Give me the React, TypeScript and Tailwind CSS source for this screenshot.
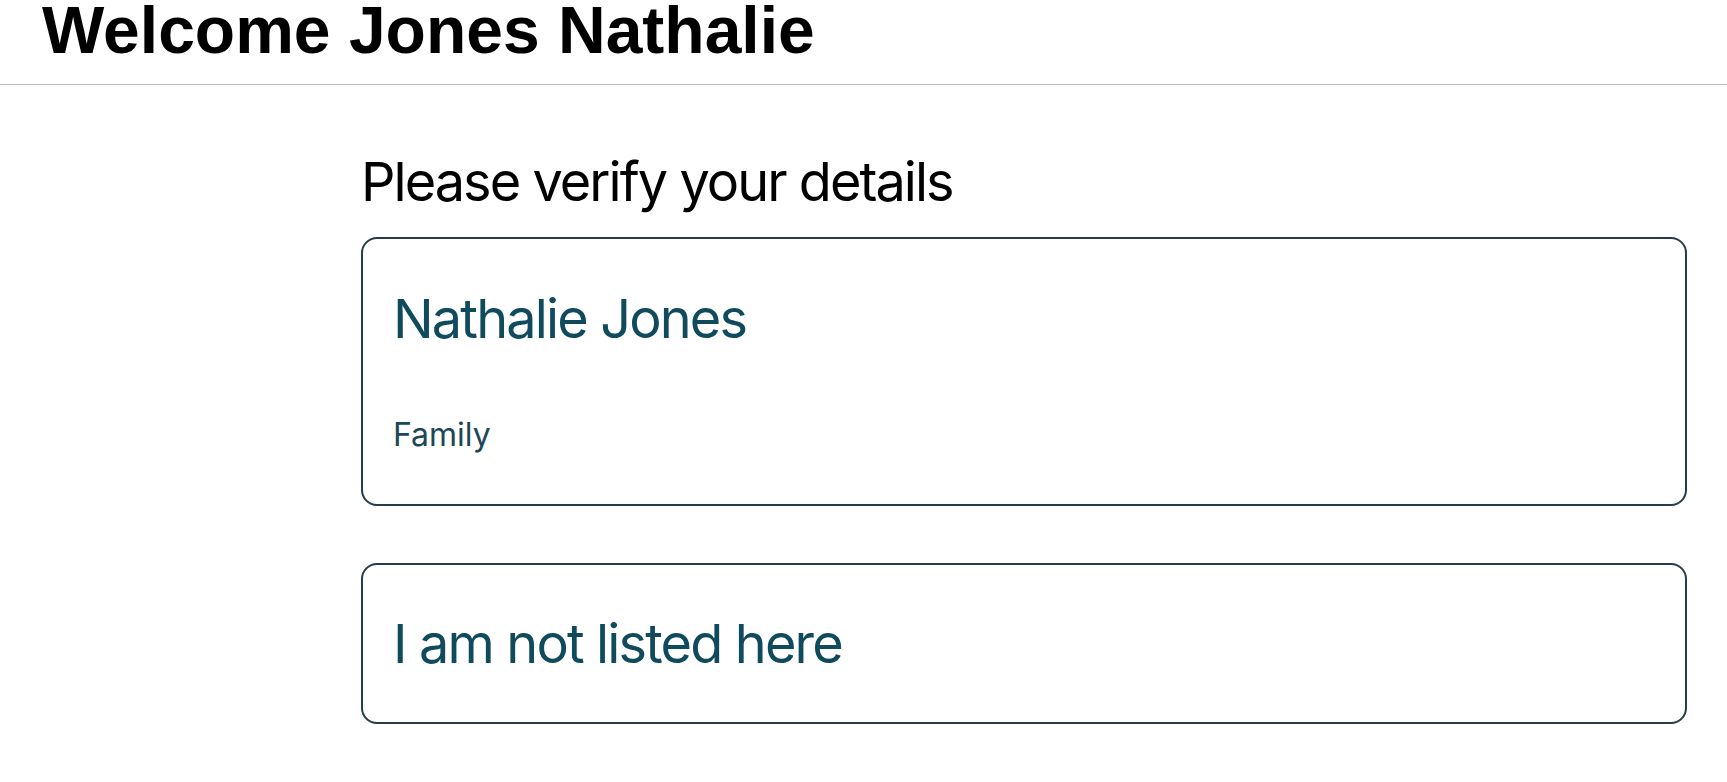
type Person = {
  name: string;
  relation?: string;
};

const people: Person[] = [{ name: "Nathalie Jones", relation: "Family" }];

function PersonCard({ person }: { person: Person }) {
  return (
    <button
      type="button"
      className="w-full text-left bg-white border-2 border-[#243c4b] rounded-[16px] px-[30px] pt-[53px] pb-[53px]"
    >
      <p className="text-[54px] leading-none tracking-[-0.034em] text-[#104a5d]">{person.name}</p>
      {person.relation && (
        <p className="mt-[73px] text-[32px] leading-none text-[#1c4759]">{person.relation}</p>
      )}
    </button>
  );
}

export default function App() {
  return (
    <div className="min-h-screen bg-white font-['Inter',sans-serif]">
      <header className="h-[85px] border-b border-[#bcbcbc] pl-[42px] pt-[2px]">
        <h1 className="font-['Liberation_Sans',Arial,sans-serif] text-[66px] font-bold leading-[56px] text-black">
          Welcome Jones Nathalie
        </h1>
      </header>

      <main className="pl-[361px] pr-[40px] pt-[70px]">
        <h2 className="text-[54px] leading-none tracking-[-0.036em] text-black">Please verify your details</h2>

        <div className="mt-[28px] flex flex-col gap-[57px]">
          {people.map((p) => (
            <PersonCard key={p.name} person={p} />
          ))}
          <button
            type="button"
            className="w-full text-left bg-white border-2 border-[#243c4b] rounded-[16px] px-[30px] pt-[52px] pb-[51px]"
          >
            <p className="text-[54px] leading-none tracking-[-0.034em] text-[#104a5d]">I am not listed here</p>
          </button>
        </div>
      </main>
    </div>
  );
}
